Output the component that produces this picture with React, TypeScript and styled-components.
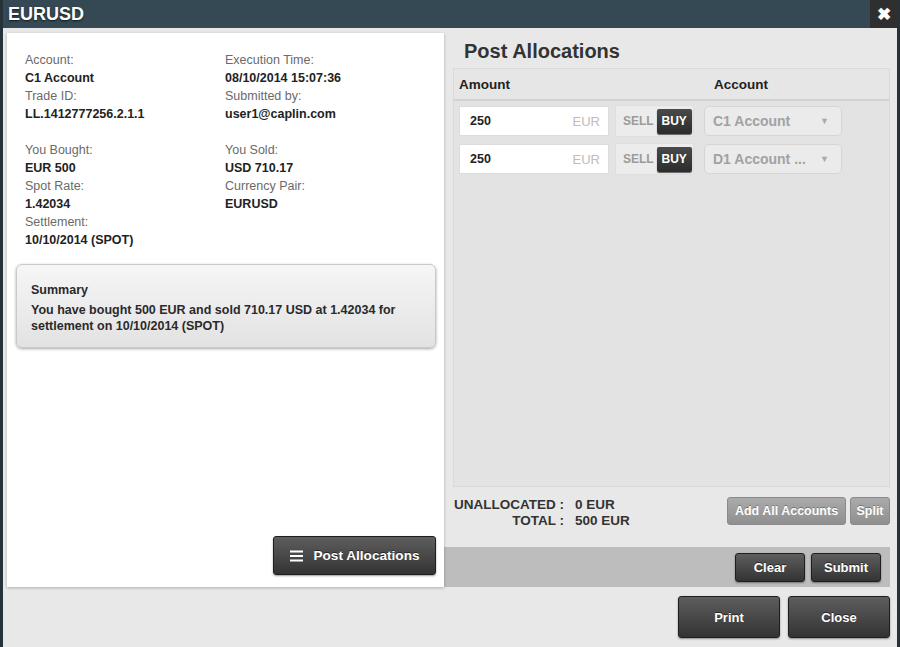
import React from "react";
import styled, { createGlobalStyle } from "styled-components";

const Global = createGlobalStyle`
  html, body { margin: 0; padding: 0; }
  body {
    background: #26323a;
    font-family: "Liberation Sans", Arial, Helvetica, sans-serif;
    width: 900px;
    height: 647px;
    overflow: hidden;
  }
`;

const Dialog = styled.div`
  margin-left: 3px;
  width: 894px;
  height: 647px;
  background: #e8e8e8;
  display: flex;
  flex-direction: column;
`;

const TitleBar = styled.div`
  height: 28px;
  background: #354955;
  display: flex;
  align-items: center;
  justify-content: space-between;
`;

const Title = styled.div`
  color: #fff;
  font-weight: bold;
  font-size: 18px;
  padding-left: 5px;
  text-shadow: 0 1px 2px rgba(0, 0, 0, 0.7);
`;

const CloseX = styled.div`
  width: 27px;
  height: 28px;
  background: #2f2f2f;
  color: #fff;
  font-weight: bold;
  font-size: 17px;
  display: flex;
  align-items: center;
  justify-content: center;
`;

const Body = styled.div`
  display: flex;
  padding: 5px 7px 0 4px;
`;

const LeftPanel = styled.div`
  width: 437px;
  height: 554px;
  background: #fff;
  box-shadow: 0 1px 3px rgba(0, 0, 0, 0.25);
  display: flex;
  flex-direction: column;
  position: relative;
  z-index: 1;
`;

const InfoGroup = styled.div<{ $gap?: boolean }>`
  display: grid;
  grid-template-columns: 200px 200px;
  padding-left: 18px;
  margin-top: ${(p) => (p.$gap ? "18px" : "18px")};
`;

const InfoCol = styled.div`
  display: flex;
  flex-direction: column;
`;

const Label = styled.div`
  font-size: 12.5px;
  line-height: 18px;
  color: #6a6a6a;
`;

const Value = styled.div`
  font-size: 12.5px;
  line-height: 18px;
  color: #222;
  font-weight: bold;
`;

const SummaryBox = styled.div`
  margin: 15px 8px 0 9px;
  height: 84px;
  box-sizing: border-box;
  border: 1px solid #c9c9c9;
  border-radius: 6px;
  background: linear-gradient(#f6f6f6, #e2e2e2);
  box-shadow: 0 1px 3px rgba(0, 0, 0, 0.35);
  padding: 17px 15px 0 14px;
  color: #2a2a2a;
  font-weight: bold;
  font-size: 12.5px;
  line-height: 16px;
`;

const SummaryTitle = styled.div`
  margin-bottom: 4px;
`;

const LeftFooter = styled.div`
  margin-top: auto;
  display: flex;
  justify-content: flex-end;
  padding: 0 8px 12px 0;
`;

const DarkButton = styled.button<{ $w: number; $h: number; $fs?: number }>`
  width: ${(p) => p.$w}px;
  height: ${(p) => p.$h}px;
  border: 1px solid #1e1e1e;
  border-radius: 3px;
  background: linear-gradient(#5e5e5e, #333333);
  color: #fff;
  font-family: "Liberation Sans", Arial, sans-serif;
  font-weight: bold;
  font-size: ${(p) => p.$fs ?? 13}px;
  text-shadow: 0 -1px 0 rgba(0, 0, 0, 0.5);
  box-shadow: 0 1px 2px rgba(0, 0, 0, 0.4);
  display: flex;
  align-items: center;
  justify-content: center;
  gap: 11px;
  padding: 0;
  cursor: pointer;
`;

const RightCol = styled.div`
  width: 446px;
  height: 554px;
  display: flex;
  flex-direction: column;
`;

const Heading = styled.div`
  font-size: 20px;
  font-weight: bold;
  color: #333;
  height: 35px;
  padding: 5px 0 0 20px;
  line-height: 26px;
  box-sizing: border-box;
`;

const Table = styled.div`
  margin-left: 9px;
  width: 437px;
  height: 419px;
  display: flex;
  flex-direction: column;
  background: #e3e3e3;
  border: 1px solid #dadada;
  box-sizing: border-box;
`;

const TableHead = styled.div`
  height: 30px;
  display: grid;
  grid-template-columns: 255px 1fr;
  align-items: center;
  background: #e6e6e6;
  border-bottom: 2px solid #d3d3d3;
  font-size: 13.5px;
  font-weight: bold;
  color: #222;
`;

const HeadCell = styled.div<{ $pl: number }>`
  padding-left: ${(p) => p.$pl}px;
`;

const Rows = styled.div`
  display: flex;
  flex-direction: column;
  gap: 8px;
  padding: 5px 0 0 5px;
`;

const Row = styled.div`
  display: flex;
  align-items: center;
  height: 30px;
`;

const AmountInput = styled.div`
  width: 150px;
  height: 30px;
  box-sizing: border-box;
  background: #fff;
  border: 1px solid #dcdcdc;
  display: flex;
  align-items: center;
  justify-content: space-between;
  padding: 0 8px 0 10px;
`;

const AmountVal = styled.span`
  font-size: 12.5px;
  font-weight: bold;
  color: #222;
`;

const Ccy = styled.span`
  font-size: 13px;
  color: #bdbdbd;
`;

const Toggle = styled.div`
  margin-left: 6px;
  width: 79px;
  height: 32px;
  box-sizing: border-box;
  background: #ececec;
  border: 1px solid #dfdfdf;
  display: flex;
  align-items: center;
  padding-left: 7px;
  gap: 3px;
`;

const SellText = styled.span`
  font-size: 12px;
  font-weight: bold;
  color: #9b9b9b;
`;

const BuyBtn = styled.span`
  width: 35px;
  height: 25px;
  background: linear-gradient(#4a4a4a, #2c2c2c);
  border-radius: 2px;
  color: #fff;
  font-size: 12px;
  font-weight: bold;
  display: flex;
  align-items: center;
  justify-content: center;
  box-shadow: 0 1px 1px rgba(0, 0, 0, 0.6);
`;

const Select = styled.div`
  margin-left: 10px;
  width: 138px;
  height: 30px;
  box-sizing: border-box;
  border: 1px solid #d6d6d6;
  border-radius: 5px;
  background: #ebebeb;
  display: flex;
  align-items: center;
  justify-content: space-between;
  padding: 0 12px 0 8px;
  font-size: 14px;
  font-weight: bold;
  color: #a2a2a2;
`;

const Arrow = styled.span`
  font-size: 9px;
  color: #aaa;
`;

const Footer = styled.div`
  height: 60px;
  display: flex;
  align-items: flex-start;
  justify-content: space-between;
  padding-left: 10px;
  box-sizing: border-box;
  padding-top: 10px;
`;

const Totals = styled.div`
  display: grid;
  grid-template-columns: auto auto;
  column-gap: 11px;
  font-size: 13.5px;
  font-weight: bold;
  color: #333;
  line-height: 16px;
`;

const TotLabel = styled.div`
  text-align: right;
`;

const FooterBtns = styled.div`
  display: flex;
  gap: 4px;
`;

const GrayButton = styled.button<{ $w: number }>`
  width: ${(p) => p.$w}px;
  height: 28px;
  border: 1px solid #8a8a8a;
  border-radius: 3px;
  background: linear-gradient(#ababab, #8f8f8f);
  color: #fff;
  font-family: "Liberation Sans", Arial, sans-serif;
  font-size: 12.5px;
  font-weight: bold;
  text-shadow: 0 -1px 0 rgba(0, 0, 0, 0.3);
  padding: 0;
`;

const ActionBar = styled.div`
  height: 40px;
  background: #bdbdbd;
  display: flex;
  align-items: center;
  justify-content: flex-end;
  gap: 6px;
  padding-right: 9px;
`;

const BottomBar = styled.div`
  display: flex;
  justify-content: flex-end;
  gap: 8px;
  padding: 9px 7px 0 0;
`;

const MenuIcon = () => (
  <svg width="13" height="12" viewBox="0 0 13 12">
    <rect x="0" y="0.5" width="13" height="2" fill="#fff" />
    <rect x="0" y="5" width="13" height="2" fill="#fff" />
    <rect x="0" y="9.5" width="13" height="2" fill="#fff" />
  </svg>
);

const alloc = [
  { amount: "250", account: "C1 Account" },
  { amount: "250", account: "D1 Account ..." },
];

export default function App() {
  return (
    <>
      <Global />
      <Dialog>
        <TitleBar>
          <Title>EURUSD</Title>
          <CloseX>✖</CloseX>
        </TitleBar>
        <Body>
          <LeftPanel>
            <InfoGroup>
              <InfoCol>
                <Label>Account:</Label>
                <Value>C1 Account</Value>
                <Label>Trade ID:</Label>
                <Value>LL.1412777256.2.1.1</Value>
              </InfoCol>
              <InfoCol>
                <Label>Execution Time:</Label>
                <Value>08/10/2014 15:07:36</Value>
                <Label>Submitted by:</Label>
                <Value>user1@caplin.com</Value>
              </InfoCol>
            </InfoGroup>
            <InfoGroup $gap>
              <InfoCol>
                <Label>You Bought:</Label>
                <Value>EUR 500</Value>
                <Label>Spot Rate:</Label>
                <Value>1.42034</Value>
                <Label>Settlement:</Label>
                <Value>10/10/2014 (SPOT)</Value>
              </InfoCol>
              <InfoCol>
                <Label>You Sold:</Label>
                <Value>USD 710.17</Value>
                <Label>Currency Pair:</Label>
                <Value>EURUSD</Value>
              </InfoCol>
            </InfoGroup>
            <SummaryBox>
              <SummaryTitle>Summary</SummaryTitle>
              <div>
                You have bought 500 EUR and sold 710.17 USD at 1.42034 for
                settlement on 10/10/2014 (SPOT)
              </div>
            </SummaryBox>
            <LeftFooter>
              <DarkButton $w={163} $h={39} $fs={13.6}>
                <MenuIcon />
                Post Allocations
              </DarkButton>
            </LeftFooter>
          </LeftPanel>
          <RightCol>
            <Heading>Post Allocations</Heading>
            <Table>
              <TableHead>
                <HeadCell $pl={5}>Amount</HeadCell>
                <HeadCell $pl={5}>Account</HeadCell>
              </TableHead>
              <Rows>
                {alloc.map((a, i) => (
                  <Row key={i}>
                    <AmountInput>
                      <AmountVal>{a.amount}</AmountVal>
                      <Ccy>EUR</Ccy>
                    </AmountInput>
                    <Toggle>
                      <SellText>SELL</SellText>
                      <BuyBtn>BUY</BuyBtn>
                    </Toggle>
                    <Select>
                      <span>{a.account}</span>
                      <Arrow>▼</Arrow>
                    </Select>
                  </Row>
                ))}
              </Rows>
            </Table>
            <Footer>
              <Totals>
                <TotLabel>UNALLOCATED :</TotLabel>
                <div>0 EUR</div>
                <TotLabel>TOTAL :</TotLabel>
                <div>500 EUR</div>
              </Totals>
              <FooterBtns>
                <GrayButton $w={119}>Add All Accounts</GrayButton>
                <GrayButton $w={40}>Split</GrayButton>
              </FooterBtns>
            </Footer>
            <ActionBar>
              <DarkButton $w={70} $h={29}>Clear</DarkButton>
              <DarkButton $w={70} $h={29}>Submit</DarkButton>
            </ActionBar>
          </RightCol>
        </Body>
        <BottomBar>
          <DarkButton $w={102} $h={42}>Print</DarkButton>
          <DarkButton $w={102} $h={42}>Close</DarkButton>
        </BottomBar>
      </Dialog>
    </>
  );
}
